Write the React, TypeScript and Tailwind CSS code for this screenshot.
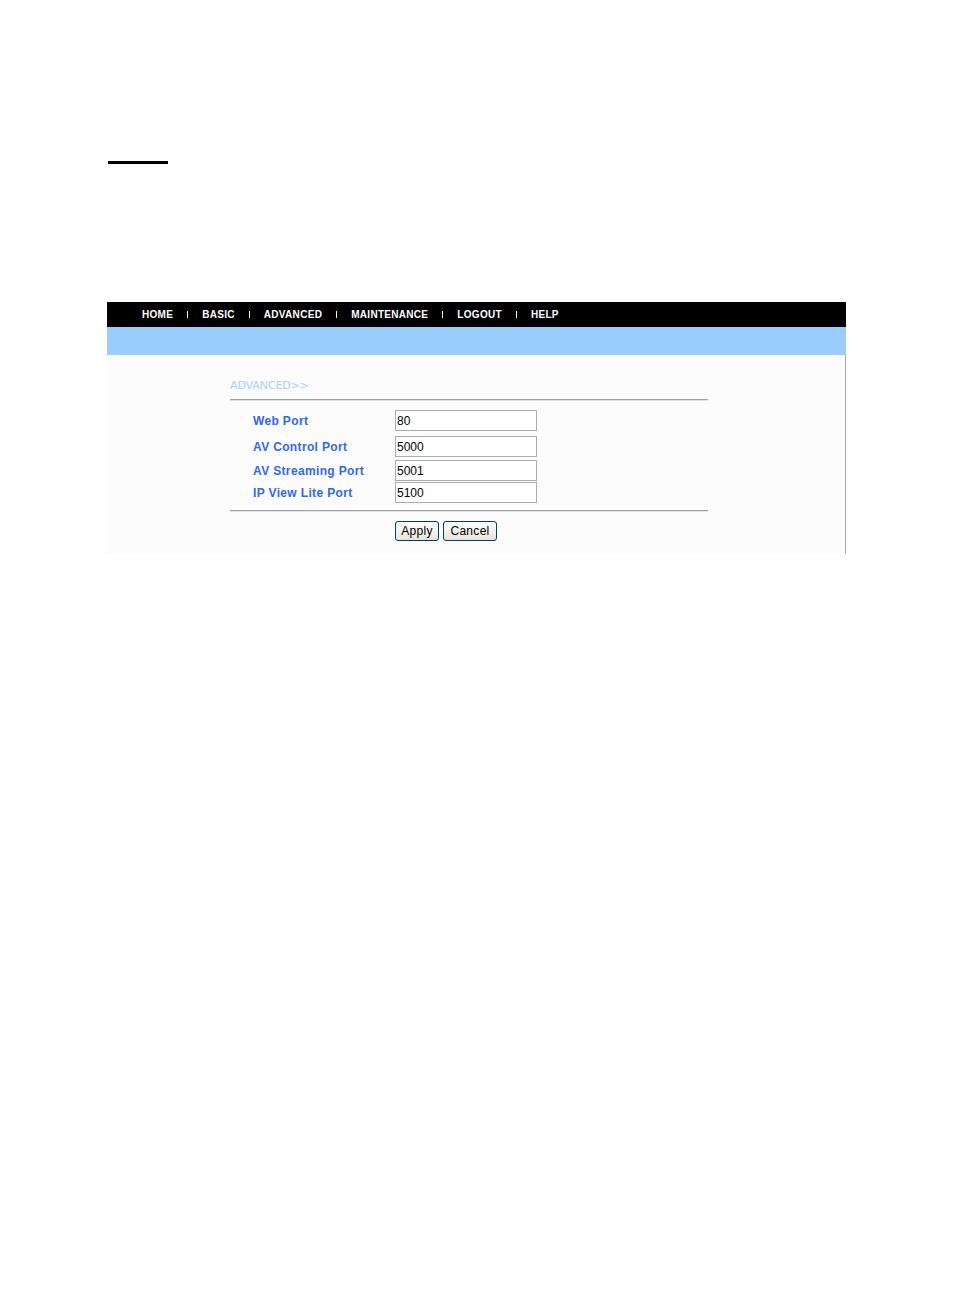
import React from 'react';

interface PortRow {
    label: string;
    value: string;
    mt: string;
}

const navItems = ['HOME', 'BASIC', 'ADVANCED', 'MAINTENANCE', 'LOGOUT', 'HELP'];

const rows: PortRow[] = [
    { label: 'Web Port', value: '80', mt: 'mt-[9px]' },
    { label: 'AV Control Port', value: '5000', mt: 'mt-[5px]' },
    { label: 'AV Streaming Port', value: '5001', mt: 'mt-[3px]' },
    { label: 'IP View Lite Port', value: '5100', mt: 'mt-[1px]' },
];

const Rule: React.FC = () => (
    <div className="w-[478px] h-[2px] border-t border-[#a0a0a8] border-b border-b-[#e4e4e8]"></div>
);

const App: React.FC = () => {
    return (
        <div className="w-[954px] min-h-[1311px] bg-white font-['Liberation_Sans',Arial,sans-serif]">
            {/* Heading rule */}
            <div className="pt-[161px] pl-[108px]">
                <div className="w-[60px] h-[3px] bg-black"></div>
            </div>

            {/* Device page */}
            <div className="mt-[138px] ml-[107px] w-[739px]">
                {/* Menu */}
                <div className="h-[25px] bg-black flex items-center pl-[35px] gap-[14px] text-white text-[10px] font-bold tracking-[0.3px]">
                    {navItems.map((item, idx) => (
                        <React.Fragment key={item}>
                            {idx > 0 && <span className="w-[1px] h-[7px] bg-white"></span>}
                            <span>{item}</span>
                        </React.Fragment>
                    ))}
                </div>
                <div className="h-[28px] bg-[#99ccff]"></div>

                {/* Content */}
                <div className="h-[199px] bg-[#fcfcfc] border-r border-[#a8a8a8] pl-[123px] pt-[24px]">
                    <div className="text-[11px] leading-[14px] text-[#a8d0f8] font-['DejaVu_Sans',Verdana,sans-serif] tracking-[-0.1px]">
                        ADVANCED&gt;&gt;
                    </div>
                    <div className="mt-[6px]">
                        <Rule />
                    </div>

                    {rows.map((row) => (
                        <div key={row.label} className={`${row.mt} flex items-center h-[21px]`}>
                            <div className="w-[165px] pl-[23px] text-[12px] font-bold text-[#3366ee] tracking-[0.35px]">
                                {row.label}
                            </div>
                            <div className="w-[142px] h-[21px] border border-[#a5acb2] bg-white flex items-center pl-[1px] text-[12px] text-black">
                                {row.value}
                            </div>
                        </div>
                    ))}

                    <div className="mt-[7px]">
                        <Rule />
                    </div>

                    {/* Buttons */}
                    <div className="mt-[9px] ml-[165px] flex gap-[4px]">
                        <button className="w-[44px] h-[20px] rounded-[3px] border border-[#003c74] bg-gradient-to-b from-white to-[#e6e4dc] text-[12px] text-black leading-none tracking-[0.3px]">
                            Apply
                        </button>
                        <button className="w-[54px] h-[20px] rounded-[3px] border border-[#003c74] bg-gradient-to-b from-white to-[#e6e4dc] text-[12px] text-black leading-none tracking-[0.3px]">
                            Cancel
                        </button>
                    </div>
                </div>
            </div>
        </div>
    );
};

export default App;
